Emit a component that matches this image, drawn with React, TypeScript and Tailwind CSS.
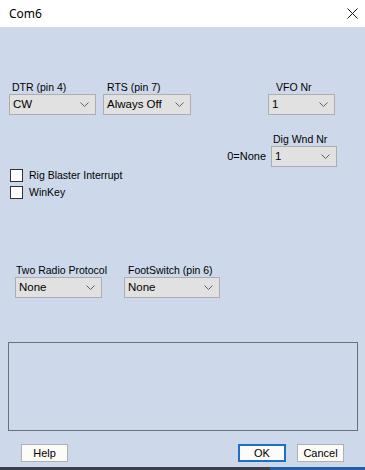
import React from "react";

const Chevron = () => (
  <svg width="9" height="5" viewBox="0 0 9 5" className="shrink-0">
    <polyline points="0.5,0.5 4.5,4.5 8.5,0.5" fill="none" stroke="#606060" strokeWidth="1" />
  </svg>
);

const Select = ({ value, w, h = "h-[21px]" }: { value: string; w: string; h?: string }) => (
  <div
    className={`${w} ${h} border border-[#adadad] bg-[#e1e1e1] flex items-center justify-between pl-[3px] pr-[6px] text-[11.5px] leading-none text-black`}
  >
    <span>{value}</span>
    <Chevron />
  </div>
);

const Label = ({ text, pl }: { text: string; pl: string }) => (
  <div className={`h-[13px] leading-[13px] text-[10.5px] text-black ${pl} whitespace-nowrap`}>{text}</div>
);

const Checkbox = ({ label }: { label: string }) => (
  <div className="h-[17px] flex items-center">
    <div className="w-[13px] h-[13px] border border-[#333] bg-white shrink-0" />
    <span className="ml-[6px] text-[10.5px] leading-none text-black">{label}</span>
  </div>
);

const Button = ({ text, primary }: { text: string; primary?: boolean }) => (
  <div
    className={`h-[18px] flex items-center justify-center text-[11px] leading-none text-black bg-[#fbfbf8] ${
      primary ? "border-2 border-[#1e6fc8] w-[48px]" : "border border-[#b0b0b0] w-[47px]"
    }`}
  >
    {text}
  </div>
);

export default function App() {
  return (
    <div
      className="w-[365px] h-[470px] bg-[#cdd9ea] flex flex-col overflow-hidden"
      style={{ fontFamily: '"Liberation Sans", Arial, sans-serif' }}
    >
      {/* title bar */}
      <div className="h-[27px] bg-white flex items-center justify-between pl-[9px] pr-[6px] shrink-0">
        <span className="text-[12px] text-black" style={{ fontFamily: '"Noto Sans", "Open Sans", sans-serif' }}>
          Com6
        </span>
        <svg width="11" height="11" viewBox="0 0 11 11" className="mr-[1px]">
          <line x1="0.5" y1="0.5" x2="10.5" y2="10.5" stroke="#111" strokeWidth="1" />
          <line x1="10.5" y1="0.5" x2="0.5" y2="10.5" stroke="#111" strokeWidth="1" />
        </svg>
      </div>

      {/* row 1 */}
      <div className="mt-[54px] flex items-start pl-[9px]">
        <div className="flex flex-col w-[87px]">
          <Label text="DTR (pin 4)" pl="pl-[3px]" />
          <Select value="CW" w="w-[87px]" />
        </div>
        <div className="flex flex-col w-[88px] ml-[7px]">
          <Label text="RTS (pin 7)" pl="pl-[4px]" />
          <Select value="Always Off" w="w-[88px]" />
        </div>
        <div className="flex flex-col w-[67px] ml-[77px]">
          <Label text="VFO Nr" pl="pl-[8px]" />
          <Select value="1" w="w-[67px]" />
        </div>
      </div>

      {/* dig wnd */}
      <div className="mt-[18px] flex justify-end items-end pr-[28px]">
        <div className="h-[21px] flex items-center text-[11px] text-black mr-[5px]">0=None</div>
        <div className="flex flex-col w-[66px]">
          <Label text="Dig Wnd Nr" pl="pl-[2px]" />
          <Select value="1" w="w-[66px]" />
        </div>
      </div>

      {/* checkboxes */}
      <div className="flex flex-col pl-[10px]">
        <Checkbox label="Rig Blaster Interrupt" />
        <Checkbox label="WinKey" />
      </div>

      {/* row 4 */}
      <div className="mt-[63px] flex items-start pl-[15px]">
        <div className="flex flex-col w-[87px]">
          <Label text="Two Radio Protocol" pl="pl-[1px]" />
          <Select value="None" w="w-[87px]" />
        </div>
        <div className="flex flex-col w-[96px] ml-[22px]">
          <Label text="FootSwitch (pin 6)" pl="pl-[4px]" />
          <Select value="None" w="w-[96px]" />
        </div>
      </div>

      {/* big box */}
      <div className="mt-[44px] ml-[8px] w-[350px] h-[89px] border border-[#6b7078]" />

      {/* buttons */}
      <div className="mt-[13px] flex items-center pl-[21px]">
        <Button text="Help" />
        <div className="ml-[170px]">
          <Button text="OK" primary />
        </div>
        <div className="ml-[11px]">
          <Button text="Cancel" />
        </div>
      </div>

      <div className="mt-auto h-[3px] flex shrink-0">
        <div className="w-[270px] bg-[#3c4046]" />
        <div className="flex-1 bg-[#1f5fa8]" />
      </div>
    </div>
  );
}
